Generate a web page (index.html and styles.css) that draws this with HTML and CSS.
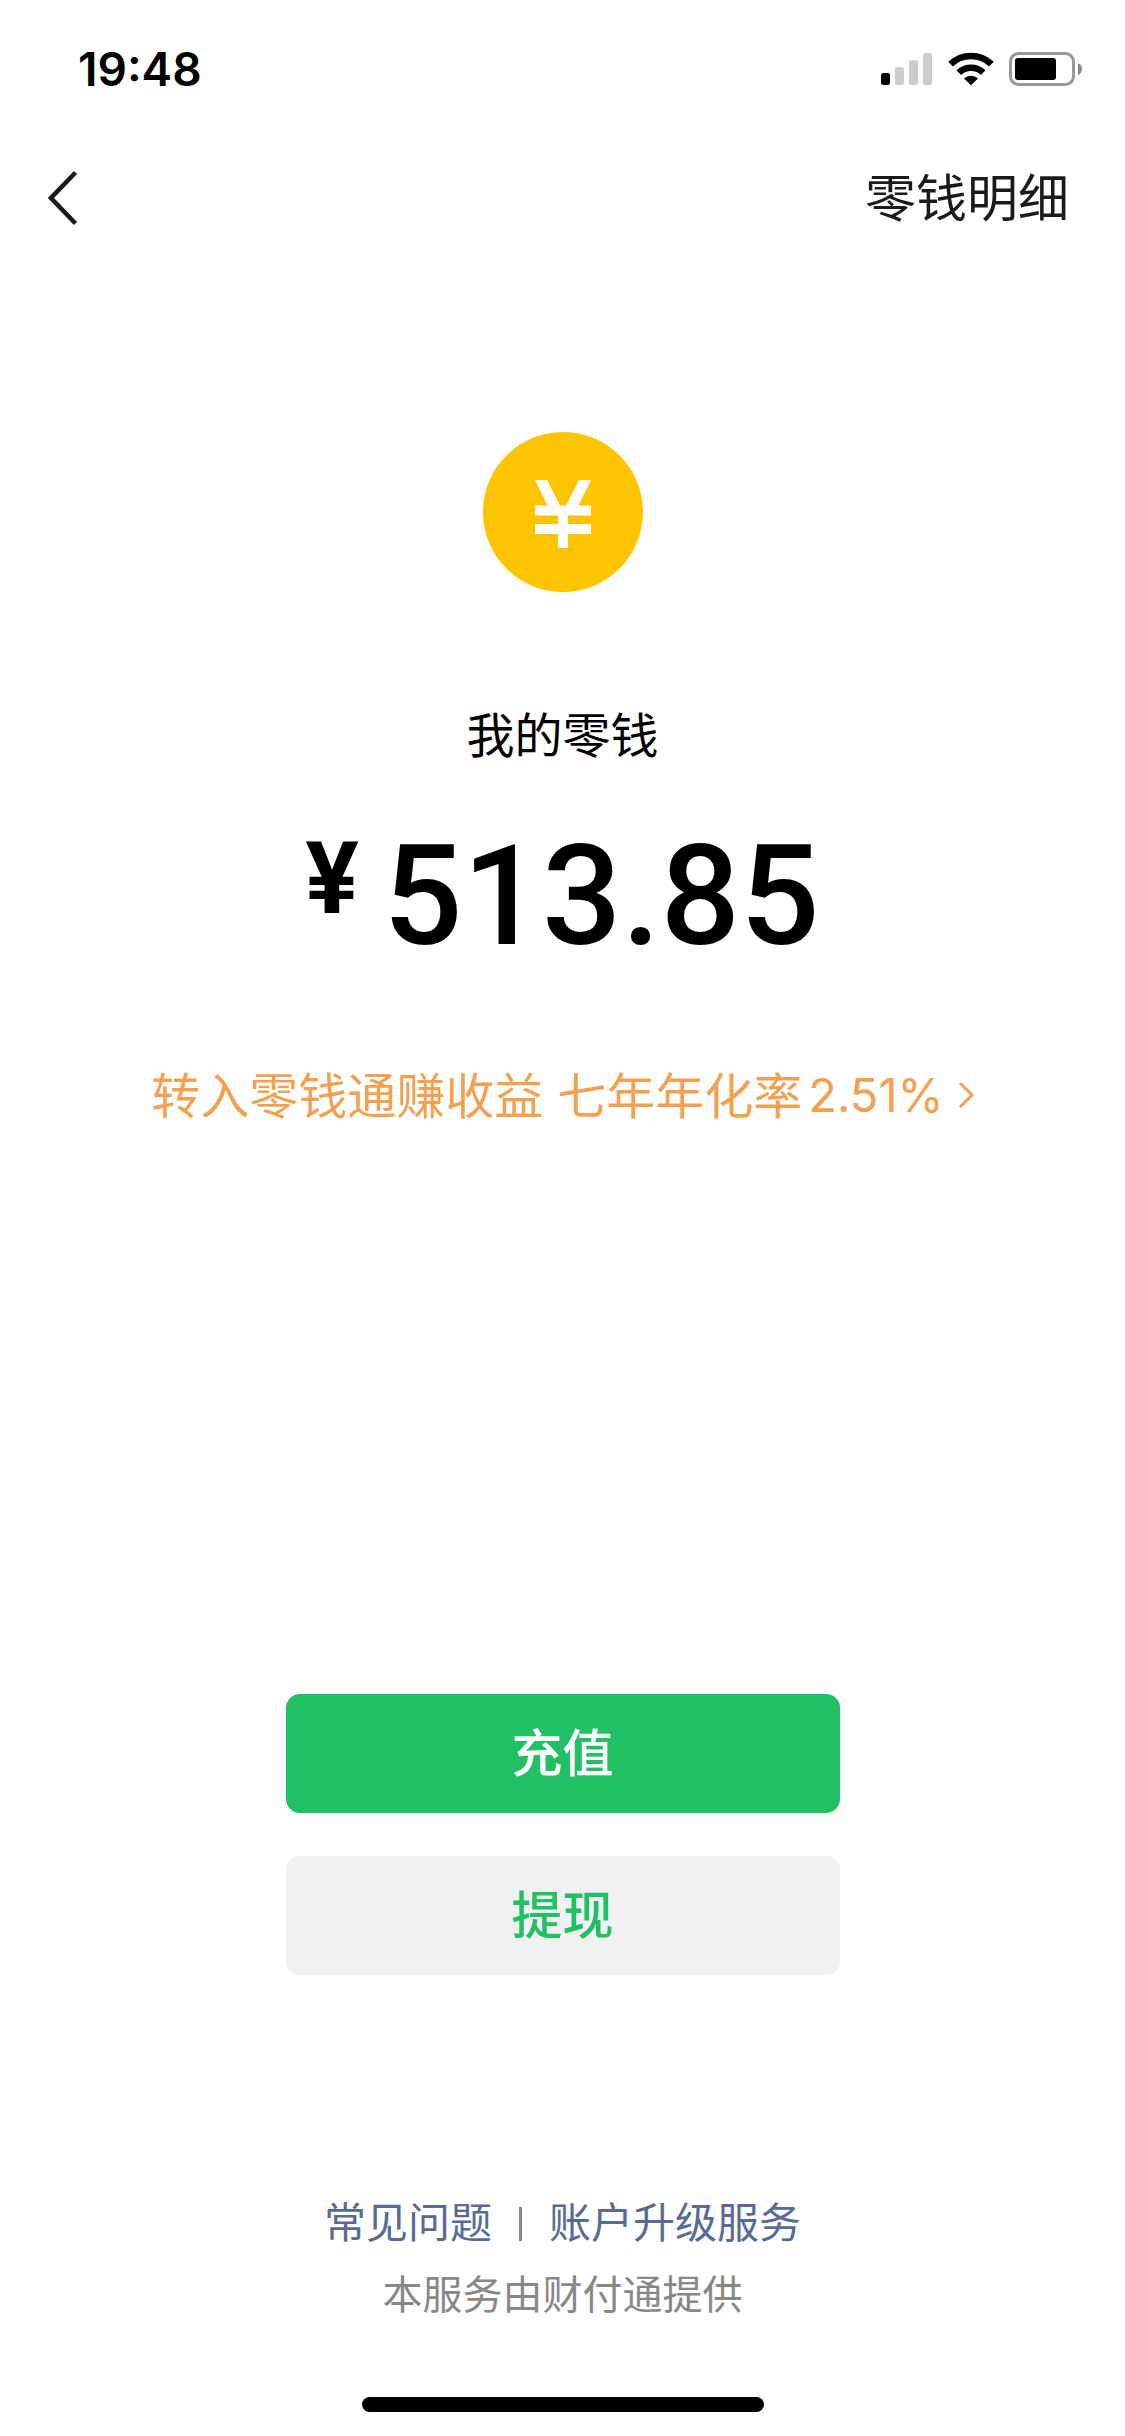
FILE: index.html
```html
<!DOCTYPE html>
<html lang="zh-CN">
<head>
<meta charset="utf-8">
<meta name="viewport" content="width=device-width, initial-scale=1">
<title>我的零钱</title>
<link rel="stylesheet" href="styles.css">
</head>
<body>
<div class="page">
  <div class="status">
    <time class="clock">19:48</time>
    <div class="indicators">
      <svg width="52" height="32" viewBox="0 0 52 32" aria-hidden="true">
        <rect x="0" y="20" width="9" height="12" rx="2.5" fill="#000"/>
        <rect x="14" y="14" width="9" height="18" rx="2.5" fill="#ccc"/>
        <rect x="28" y="7" width="9" height="25" rx="2.5" fill="#ccc"/>
        <rect x="42" y="0" width="9" height="32" rx="2.5" fill="#ccc"/>
      </svg>
      <svg width="46" height="34" viewBox="0 0 46 34" aria-hidden="true">
        <g fill="none" stroke="#000" stroke-width="6.6">
          <path d="M2.6 12.2A29.5 29.5 0 0 1 43.400 12.2"/>
          <path d="M10.800 20.600A17.700 17.700 0 0 1 35.200 20.600"/>
        </g>
        <path d="M16 26.400A10.500 10.500 0 0 1 30 26.400L23 33.200Z"/>
      </svg>
      <svg width="74" height="34" viewBox="0 0 74 34" aria-hidden="true">
        <rect x="1.500" y="1.500" width="63" height="31" rx="8" fill="none" stroke="#999" stroke-width="3"/>
        <rect x="6" y="6" width="41" height="22" rx="3" fill="#000"/>
        <path d="M69 11Q73 13 73 17T69 23Z" fill="#888"/>
      </svg>
    </div>
  </div>
  <header class="nav">
    <a class="back" href="#" aria-label="返回">
      <svg width="30" height="56" viewBox="0 0 30 56" aria-hidden="true"><path d="M27.500 2.500L3 28L27.500 53.500" fill="none" stroke="#1a1a1a" stroke-width="4.500"/></svg>
    </a>
    <a class="detail" href="#">零钱明细</a>
  </header>
  <main class="wallet">
    <svg class="coin" width="160" height="160" viewBox="0 0 160 160" aria-hidden="true">
      <circle cx="80" cy="80" r="80" fill="#fec400"/>
      <path fill="#fff" d="M52 48H64L77 73.500H83L96 48H108L95.500 73.500H108V83.500H85V92H108V102H85V116H75V102H52V92H75V83.500H52V73.500H64.500Z"/>
    </svg>
    <h1 class="label">我的零钱</h1>
    <p class="amount"><span class="yen">¥</span><span>513.85</span></p>
    <a class="promo" href="#">
      <span>转入零钱通赚收益</span>
      <span class="yield">七年年化率<span class="rate">2.51%</span></span>
      <svg class="arrow" width="16" height="28" viewBox="0 0 16 28" aria-hidden="true"><path d="M2 2L14 14L2 26" fill="none" stroke="#f3a14f" stroke-width="3"/></svg>
    </a>
  </main>
  <div class="actions">
    <button class="btn primary" type="button">充值</button>
    <button class="btn" type="button">提现</button>
  </div>
  <footer class="footer">
    <nav class="links"><a href="#">常见问题</a><span class="divider"></span><a href="#">账户升级服务</a></nav>
    <p class="provider">本服务由财付通提供</p>
    <div class="home"></div>
  </footer>
</div>
</body>
</html>
```
FILE: styles.css
```css
* { box-sizing: border-box; }
body {
  margin: 0;
  background: #fefefe;
  color: #000;
  font-family: "Noto Sans CJK SC", sans-serif;
}
h1, p { margin: 0; font-weight: 400; }
a { text-decoration: none; color: inherit; }
svg { display: block; flex: none; }
.page { min-height: 100vh; display: flex; flex-direction: column; }

.status {
  display: flex;
  align-items: center;
  justify-content: space-between;
  height: 138px;
  padding: 0 42px 0 78px;
}
.clock { font: 600 46px/1 Inter, sans-serif; }
.indicators { display: flex; align-items: center; gap: 15px; }

.nav {
  display: flex;
  align-items: center;
  justify-content: space-between;
  height: 120px;
  padding: 0 56px 0 48px;
}
.detail { padding-bottom: 6px; font-size: 51px; line-height: 72px; color: #1a1a1a; }

.wallet {
  display: flex;
  flex-direction: column;
  align-items: center;
  padding-top: 174px;
}
.label { margin-top: 104px; font-size: 48px; line-height: 72px; }
.amount {
  display: flex;
  align-items: flex-start;
  gap: 24px;
  margin-top: 56px;
  font: 500 140px/144px Roboto, sans-serif;
}
.yen { font-size: 100px; font-weight: 700; line-height: 110px; }
.promo {
  display: flex;
  align-items: center;
  gap: 14px;
  margin-top: 87px;
  font-size: 49px;
  line-height: 72px;
  color: #f3a14f;
}
.yield { display: flex; align-items: center; gap: 6px; }
.rate { padding-top: 4px; font-family: Inter, sans-serif; font-size: 47px; }
.arrow { margin-top: 4px; }

.actions {
  display: flex;
  flex-direction: column;
  align-items: center;
  gap: 43px;
  margin-top: auto;
}
.btn {
  width: 554px;
  max-width: 90%;
  height: 119px;
  padding: 0 0 8px;
  border: 0;
  border-radius: 14px;
  background: #f1f1f1;
  color: #22c064;
  font: 500 51px/72px "Noto Sans CJK SC", sans-serif;
}
.primary { background: #22c064; color: #fff; }

.footer {
  display: flex;
  flex-direction: column;
  align-items: center;
  padding: 215px 0 24px;
}
.links {
  display: flex;
  align-items: center;
  gap: 27px;
  font-size: 42px;
  line-height: 60px;
  color: #576b95;
}
.divider { width: 3px; height: 34px; margin-top: 8px; background: #888; }
.provider { margin-top: 12px; font-size: 40px; line-height: 60px; color: #888; }
.home { width: 402px; height: 15px; margin-top: 75px; border-radius: 8px; background: #000; }
```
